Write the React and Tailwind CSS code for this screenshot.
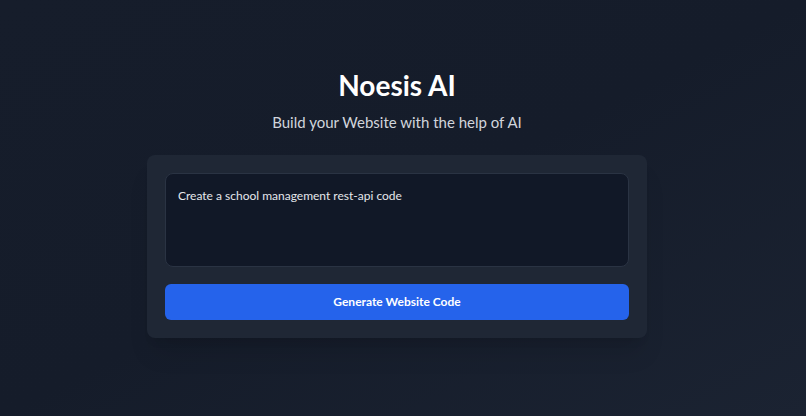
export default function App() {
  return (
    <div
      className="min-h-screen w-full bg-gradient-to-br from-[#161d2b] via-[#151c2a] to-[#1b2332] flex flex-col items-center pt-[67px] pr-3"
      style={{ fontFamily: 'Lato, "Noto Sans", sans-serif' }}
    >
      <h1 className="text-[28px] leading-9 font-bold text-white">Noesis AI</h1>
      <p className="mt-[5px] text-[15px] leading-7 text-gray-300">Build your Website with the help of AI</p>

      <div className="mt-[19px] w-[500px] rounded-lg bg-[#1f2735] p-[18px] shadow-xl">
        <textarea
          className="block w-full h-[94px] resize-none rounded-lg border border-[#2a3343] bg-[#111827] px-3 py-3 text-[12px] leading-5 text-gray-200 outline-none"
          defaultValue="Create a school management rest-api code"
          spellCheck={false}
        />
        <button className="mt-[17px] w-full h-9 rounded-md bg-[#2563eb] text-[12px] font-bold text-white">
          Generate Website Code
        </button>
      </div>
    </div>
  )
}
